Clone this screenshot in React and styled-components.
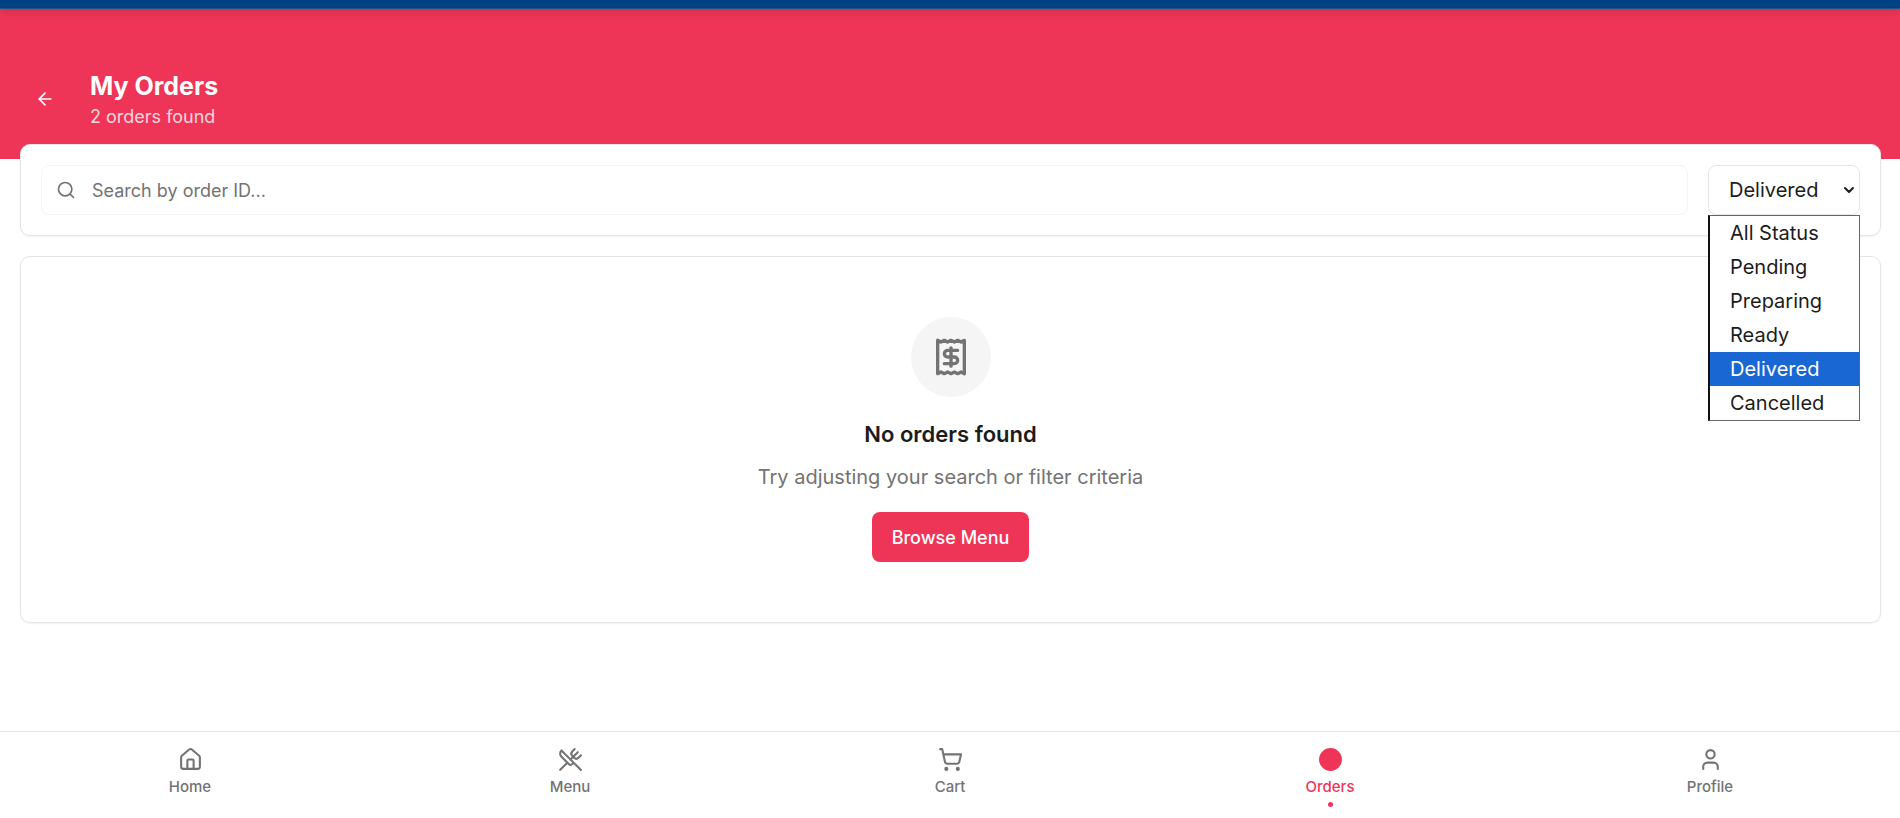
import React, { useState } from "react";
import styled, { createGlobalStyle } from "styled-components";
import {
  ArrowLeft,
  ChevronDown,
  Circle,
  House,
  Receipt,
  Search,
  ShoppingCart,
  User,
  UtensilsCrossed,
} from "lucide-react";

const GlobalStyle = createGlobalStyle`
  *, *::before, *::after { box-sizing: border-box; }
  body {
    margin: 0;
    background: #fff;
    color: #1c1c1c;
    font-family: Inter, "Liberation Sans", sans-serif;
    font-size: 20px;
    line-height: 30px;
  }
  h1, h2, p, ul { margin: 0; padding: 0; }
  button, input, select { font-family: inherit; }
`;

const Page = styled.div`
  min-height: 100vh;
  display: flex;
  flex-direction: column;
`;

const StatusBar = styled.div`
  position: relative;
  height: 9px;
  background: #004182;
  border-bottom: 1px solid #1f5390;
  box-shadow: 0 5px 8px -1px rgba(0, 0, 0, 0.1), 0 2px 5px -2px rgba(0, 0, 0, 0.1);
`;

const Header = styled.header`
  display: flex;
  align-items: center;
  gap: 20px;
  padding: 60px 20px 30px;
  background: #ee3558;
  color: #fff;
`;

const BackButton = styled.button`
  display: grid;
  place-items: center;
  width: 50px;
  height: 50px;
  padding: 0;
  border: 0;
  border-radius: 8px;
  background: transparent;
  color: inherit;
  cursor: pointer;
`;

const Title = styled.h1`
  font-size: 25px;
  font-weight: 700;
  line-height: 35px;
`;

const Subtitle = styled.p`
  font-size: 18px;
  line-height: 25px;
  color: rgba(255, 255, 255, 0.8);
`;

const Main = styled.main`
  display: flex;
  flex-direction: column;
  gap: 20px;
  margin-top: -15px;
  padding: 0 19px 20px 20px;
`;

const Card = styled.section`
  background: #fff;
  border: 1px solid #e5e5e5;
  border-radius: 10px;
  box-shadow: 0 1px 2px rgba(0, 0, 0, 0.06);
`;

const FilterCard = styled(Card)`
  position: relative;
  display: flex;
  gap: 20px;
  padding: 20px;
`;

const SearchField = styled.label`
  flex: 1;
  display: flex;
  align-items: center;
  gap: 16px;
  height: 50px;
  padding: 0 14px;
  border: 1px solid #f5f5f5;
  border-radius: 8px;
  color: #737373;
`;

const SearchInput = styled.input`
  flex: 1;
  min-width: 0;
  height: 100%;
  padding: 0;
  border: 0;
  outline: 0;
  background: transparent;
  color: #1c1c1c;
  font-size: 18px;
  &::placeholder { color: #737373; opacity: 1; }
`;

const SelectWrap = styled.div`
  position: relative;
`;

const StatusSelect = styled.select`
  display: block;
  width: 152px;
  height: 50px;
  padding: 0 24px 0 20px;
  appearance: none;
  border: 1px solid #e5e5e5;
  border-radius: 8px;
  background: #fff;
  color: #1c1c1c;
  font-size: 20px;
`;

const SelectArrow = styled(ChevronDown)`
  position: absolute;
  top: 17px;
  right: 3px;
  pointer-events: none;
`;

const OptionList = styled.ul`
  position: absolute;
  z-index: 2;
  top: 100%;
  left: 0;
  right: 0;
  list-style: none;
  background: #fff;
  border: 1px solid #666;
  border-left: 2px solid #111;
`;

const Option = styled.li`
  height: 34px;
  padding-left: 20px;
  line-height: 34px;
  cursor: default;
  background: ${(p) => (p.$selected ? "#1967d2" : "transparent")};
  color: ${(p) => (p.$selected ? "#fff" : "#1c1c1c")};
`;

const EmptyCard = styled(Card)`
  display: flex;
  flex-direction: column;
  align-items: center;
  padding: 60px 20px;
  text-align: center;
`;

const IconDisc = styled.div`
  display: grid;
  place-items: center;
  width: 80px;
  height: 80px;
  margin-bottom: 20px;
  border-radius: 50%;
  background: #f5f5f5;
  color: #737373;
`;

const EmptyTitle = styled.h2`
  margin-bottom: 10px;
  font-size: 22px;
  font-weight: 600;
  line-height: 35px;
`;

const EmptyText = styled.p`
  margin-bottom: 20px;
  color: #737373;
`;

const PrimaryButton = styled.button`
  height: 50px;
  padding: 0 20px;
  border: 0;
  border-radius: 8px;
  background: #ee3558;
  color: #fff;
  font-size: 18px;
  font-weight: 500;
  cursor: pointer;
`;

const BottomNav = styled.nav`
  display: flex;
  margin-top: auto;
  border-top: 1px solid #e5e5e5;
  background: #fff;
`;

const NavLink = styled.a`
  flex: 1;
  display: flex;
  flex-direction: column;
  align-items: center;
  gap: 5px;
  padding: 15px 0 11px;
  color: ${(p) => (p.$active ? "#ee3558" : "#737373")};
  font-size: 15px;
  font-weight: 500;
  line-height: 20px;
  text-decoration: none;
`;

const ActiveDot = styled.span`
  width: 5px;
  height: 5px;
  border-radius: 50%;
  background: ${(p) => (p.$active ? "#ee3558" : "transparent")};
`;

const statuses = ["All Status", "Pending", "Preparing", "Ready", "Delivered", "Cancelled"];

const navItems = [
  { label: "Home", icon: House },
  { label: "Menu", icon: UtensilsCrossed },
  { label: "Cart", icon: ShoppingCart },
  { label: "Orders", icon: Circle, active: true },
  { label: "Profile", icon: User },
];

export default function App() {
  const [status, setStatus] = useState("Delivered");
  const [query, setQuery] = useState("");

  return (
    <Page>
      <GlobalStyle />
      <StatusBar />
      <Header>
        <BackButton type="button" aria-label="Back">
          <ArrowLeft size={20} />
        </BackButton>
        <div>
          <Title>My Orders</Title>
          <Subtitle>2 orders found</Subtitle>
        </div>
      </Header>
      <Main>
        <FilterCard>
          <SearchField>
            <Search size={20} />
            <SearchInput
              type="text"
              aria-label="Search by order ID"
              placeholder="Search by order ID..."
              value={query}
              onChange={(e) => setQuery(e.target.value)}
            />
          </SearchField>
          <SelectWrap>
            <StatusSelect
              aria-label="Order status"
              value={status}
              onChange={(e) => setStatus(e.target.value)}
            >
              {statuses.map((s) => (
                <option key={s}>{s}</option>
              ))}
            </StatusSelect>
            <SelectArrow size={16} strokeWidth={3} aria-hidden="true" />
            <OptionList role="listbox" aria-label="Order status options">
              {statuses.map((s) => (
                <Option
                  key={s}
                  role="option"
                  aria-selected={s === status}
                  $selected={s === status}
                  onClick={() => setStatus(s)}
                >
                  {s}
                </Option>
              ))}
            </OptionList>
          </SelectWrap>
        </FilterCard>
        <EmptyCard>
          <IconDisc>
            <Receipt size={40} />
          </IconDisc>
          <EmptyTitle>No orders found</EmptyTitle>
          <EmptyText>Try adjusting your search or filter criteria</EmptyText>
          <PrimaryButton type="button">Browse Menu</PrimaryButton>
        </EmptyCard>
      </Main>
      <BottomNav aria-label="Main">
        {navItems.map(({ label, icon: Icon, active }) => (
          <NavLink
            key={label}
            href={`#${label.toLowerCase()}`}
            $active={active}
            aria-current={active ? "page" : undefined}
          >
            <Icon size={25} fill={active ? "currentColor" : "none"} />
            {label}
            <ActiveDot $active={active} />
          </NavLink>
        ))}
      </BottomNav>
    </Page>
  );
}
